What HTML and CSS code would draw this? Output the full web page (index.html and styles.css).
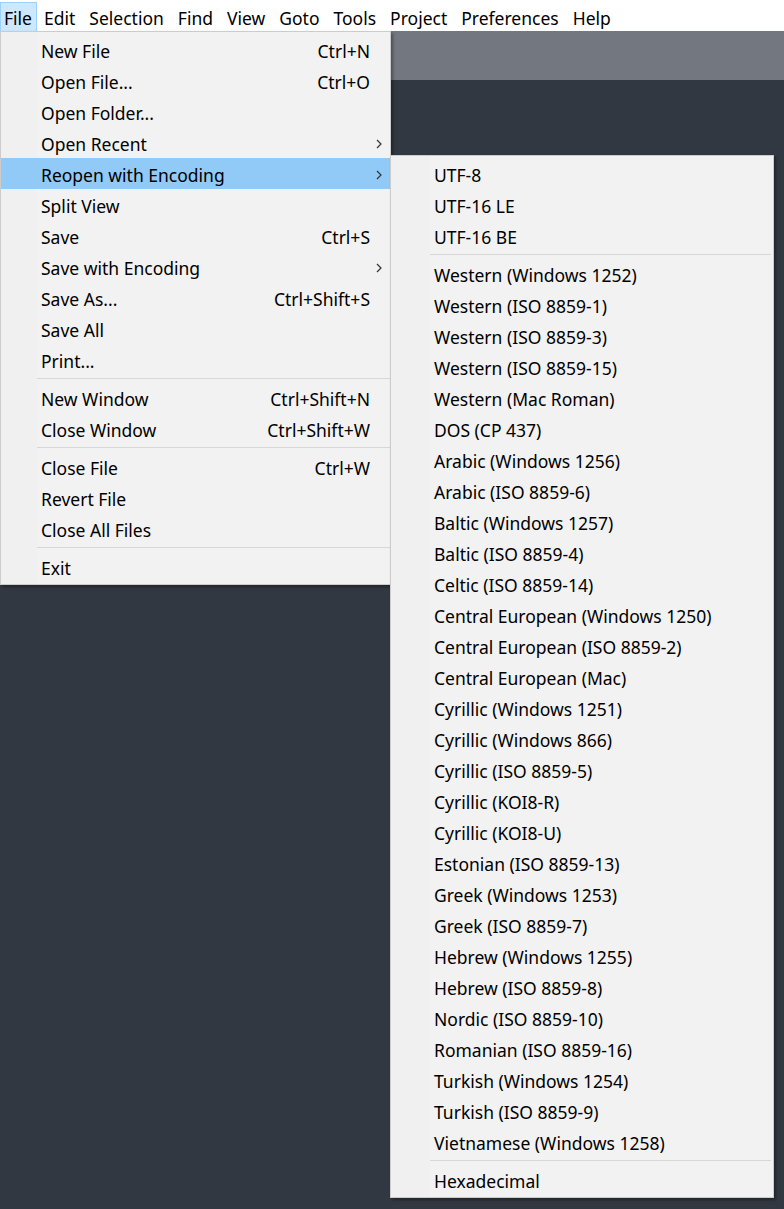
FILE: index.html
```html
<!DOCTYPE html>
<html>
<head>
<meta charset="utf-8">
<link rel="stylesheet" href="styles.css">
</head>
<body>
<div class="menubar">
  <span class="mb-item active">File</span>
  <span class="mb-item">Edit</span>
  <span class="mb-item">Selection</span>
  <span class="mb-item">Find</span>
  <span class="mb-item">View</span>
  <span class="mb-item">Goto</span>
  <span class="mb-item">Tools</span>
  <span class="mb-item">Project</span>
  <span class="mb-item">Preferences</span>
  <span class="mb-item">Help</span>
</div>
<div class="tabstrip"></div>
<div class="editor"></div>

<div class="menu file-menu">
  <div class="mi"><span class="lbl">New File</span><span class="sc">Ctrl+N</span></div>
  <div class="mi"><span class="lbl">Open File...</span><span class="sc">Ctrl+O</span></div>
  <div class="mi"><span class="lbl">Open Folder...</span></div>
  <div class="mi"><span class="lbl">Open Recent</span><svg class="arr" width="6" height="10" viewBox="0 0 6 10"><path d="M1 1 L5 5 L1 9" fill="none" stroke="#333" stroke-width="1.2"/></svg></div>
  <div class="mi hl"><span class="lbl">Reopen with Encoding</span><svg class="arr" width="6" height="10" viewBox="0 0 6 10"><path d="M1 1 L5 5 L1 9" fill="none" stroke="#333" stroke-width="1.2"/></svg></div>
  <div class="mi"><span class="lbl">Split View</span></div>
  <div class="mi"><span class="lbl">Save</span><span class="sc">Ctrl+S</span></div>
  <div class="mi"><span class="lbl">Save with Encoding</span><svg class="arr" width="6" height="10" viewBox="0 0 6 10"><path d="M1 1 L5 5 L1 9" fill="none" stroke="#333" stroke-width="1.2"/></svg></div>
  <div class="mi"><span class="lbl">Save As...</span><span class="sc">Ctrl+Shift+S</span></div>
  <div class="mi"><span class="lbl">Save All</span></div>
  <div class="mi"><span class="lbl">Print...</span></div>
  <div class="sep"></div>
  <div class="mi"><span class="lbl">New Window</span><span class="sc">Ctrl+Shift+N</span></div>
  <div class="mi"><span class="lbl">Close Window</span><span class="sc">Ctrl+Shift+W</span></div>
  <div class="sep"></div>
  <div class="mi"><span class="lbl">Close File</span><span class="sc">Ctrl+W</span></div>
  <div class="mi"><span class="lbl">Revert File</span></div>
  <div class="mi"><span class="lbl">Close All Files</span></div>
  <div class="sep"></div>
  <div class="mi"><span class="lbl">Exit</span></div>
</div>

<div class="menu sub-menu">
  <div class="mi"><span class="lbl">UTF-8</span></div>
  <div class="mi"><span class="lbl">UTF-16 LE</span></div>
  <div class="mi"><span class="lbl">UTF-16 BE</span></div>
  <div class="sep"></div>
  <div class="mi"><span class="lbl">Western (Windows 1252)</span></div>
  <div class="mi"><span class="lbl">Western (ISO 8859-1)</span></div>
  <div class="mi"><span class="lbl">Western (ISO 8859-3)</span></div>
  <div class="mi"><span class="lbl">Western (ISO 8859-15)</span></div>
  <div class="mi"><span class="lbl">Western (Mac Roman)</span></div>
  <div class="mi"><span class="lbl">DOS (CP 437)</span></div>
  <div class="mi"><span class="lbl">Arabic (Windows 1256)</span></div>
  <div class="mi"><span class="lbl">Arabic (ISO 8859-6)</span></div>
  <div class="mi"><span class="lbl">Baltic (Windows 1257)</span></div>
  <div class="mi"><span class="lbl">Baltic (ISO 8859-4)</span></div>
  <div class="mi"><span class="lbl">Celtic (ISO 8859-14)</span></div>
  <div class="mi"><span class="lbl">Central European (Windows 1250)</span></div>
  <div class="mi"><span class="lbl">Central European (ISO 8859-2)</span></div>
  <div class="mi"><span class="lbl">Central European (Mac)</span></div>
  <div class="mi"><span class="lbl">Cyrillic (Windows 1251)</span></div>
  <div class="mi"><span class="lbl">Cyrillic (Windows 866)</span></div>
  <div class="mi"><span class="lbl">Cyrillic (ISO 8859-5)</span></div>
  <div class="mi"><span class="lbl">Cyrillic (KOI8-R)</span></div>
  <div class="mi"><span class="lbl">Cyrillic (KOI8-U)</span></div>
  <div class="mi"><span class="lbl">Estonian (ISO 8859-13)</span></div>
  <div class="mi"><span class="lbl">Greek (Windows 1253)</span></div>
  <div class="mi"><span class="lbl">Greek (ISO 8859-7)</span></div>
  <div class="mi"><span class="lbl">Hebrew (Windows 1255)</span></div>
  <div class="mi"><span class="lbl">Hebrew (ISO 8859-8)</span></div>
  <div class="mi"><span class="lbl">Nordic (ISO 8859-10)</span></div>
  <div class="mi"><span class="lbl">Romanian (ISO 8859-16)</span></div>
  <div class="mi"><span class="lbl">Turkish (Windows 1254)</span></div>
  <div class="mi"><span class="lbl">Turkish (ISO 8859-9)</span></div>
  <div class="mi"><span class="lbl">Vietnamese (Windows 1258)</span></div>
  <div class="sep"></div>
  <div class="mi"><span class="lbl">Hexadecimal</span></div>
</div>
</body>
</html>
```
FILE: styles.css
```css
html, body {
  margin: 0;
  padding: 0;
}
body {
  background: #323841;
  width: 784px;
  height: 1209px;
  overflow: hidden;
  font-family: "Noto Sans", "Open Sans", sans-serif;
  font-size: 17.5px;
  color: #000;
  position: relative;
}
.menubar {
  height: 31px;
  background: #fff;
  display: flex;
  align-items: stretch;
  padding-top: 2px;
  box-sizing: border-box;
}
.mb-item {
  display: flex;
  align-items: center;
  padding: 3px 6px 0 6px;
  border: 1px solid transparent;
  border-bottom: 0;
  line-height: 1;
}
.mb-item.active {
  background: #cce8ff;
  border-color: #99d1ff;
  padding-left: 3px;
  padding-right: 4px;
}
.tabstrip {
  height: 49px;
  background: #737780;
}
.editor {
  height: 1129px;
  background: #323841;
}
.menu {
  position: absolute;
  background: #f2f2f2;
  border: 1px solid #cccccc;
  box-shadow: 2px 2px 3px rgba(0, 0, 0, 0.35);
  box-sizing: border-box;
  display: flex;
  flex-direction: column;
}
.file-menu {
  left: 0;
  top: 31px;
  width: 391px;
  padding: 3px 0 0 0;
  height: 554px;
  background: linear-gradient(to right, #f0f0f0 0, #f0f0f0 36px, #f2f2f2 36px);
}
.sub-menu {
  left: 390px;
  top: 155px;
  width: 384px;
  padding: 3px 0 0 0;
  height: 1043px;
  background: linear-gradient(to right, #f0f0f0 0, #f0f0f0 39px, #f2f2f2 39px);
}
.mi {
  height: 31px;
  box-sizing: border-box;
  flex: none;
  display: flex;
  align-items: center;
  padding-left: 40px;
  padding-right: 20px;
  white-space: nowrap;
}
.sub-menu .mi {
  padding-left: 43px;
}
.mi .lbl {
  flex: 1;
}
.mi .sc {
  text-align: right;
}
.mi .arr {
  margin-right: -12px;
}
.mi.hl {
  background: #91c9f7;
}
.file-menu .mi.hl {
  margin-top: -1px;
  margin-bottom: 1px;
  padding-top: 2px;
}
.sep {
  height: 7px;
  flex: none;
  box-sizing: border-box;
  padding-top: 2px;
  margin-left: 36px;
}
.sep::before {
  content: "";
  display: block;
  height: 1px;
  background: #d7d7d7;
}
.sub-menu .sep {
  margin-left: 39px;
  margin-right: 2px;
}
```
